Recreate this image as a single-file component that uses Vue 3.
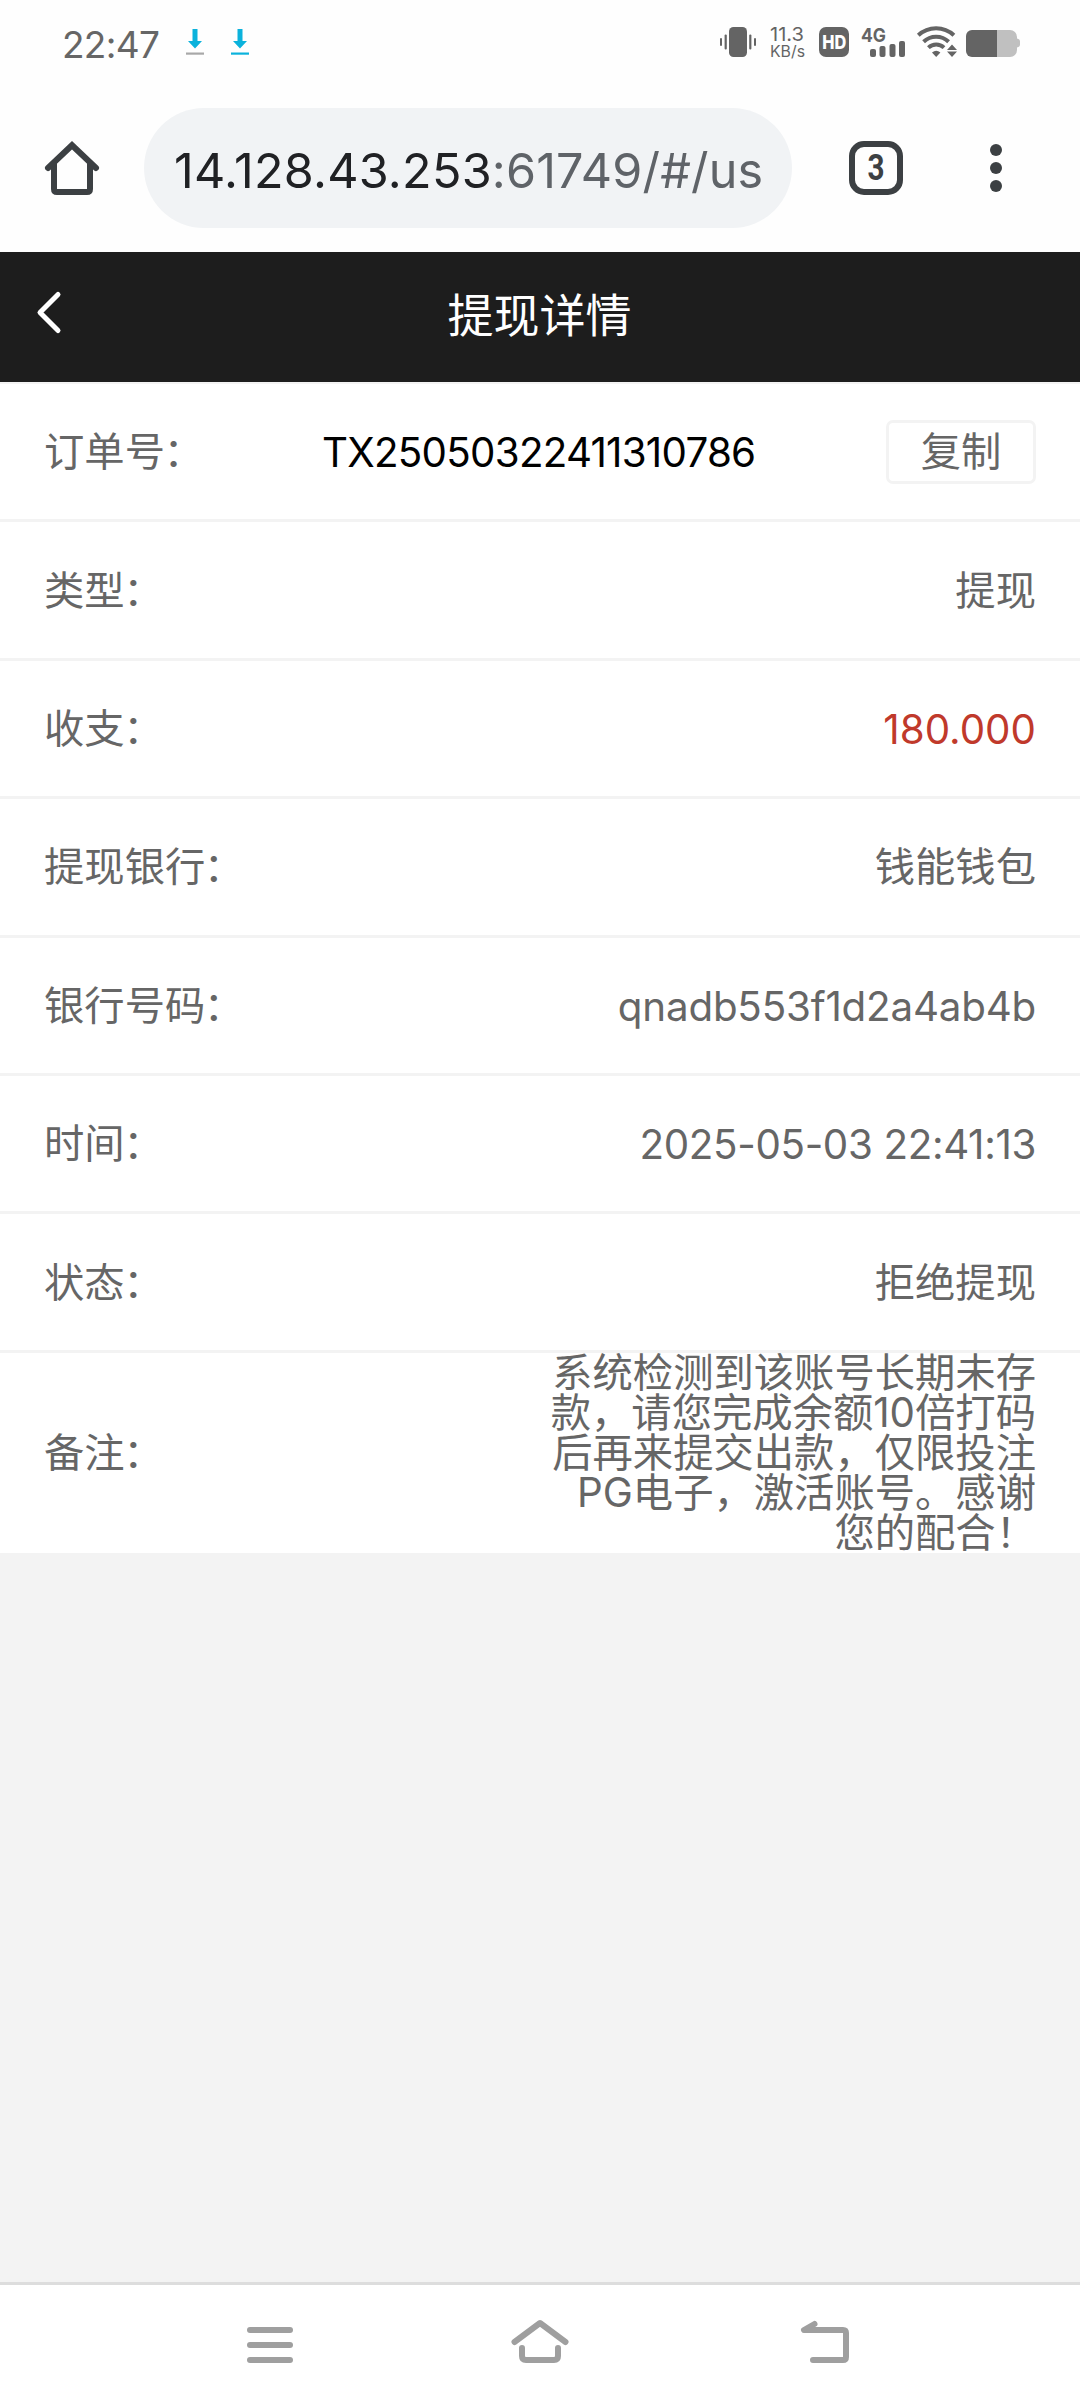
<script setup>
const rows = [
  { label: '类型', value: '提现', kind: 'cjk' },
  { label: '收支', value: '180.000', kind: 'amount' },
  { label: '提现银行', value: '钱能钱包', kind: 'cjk' },
  { label: '银行号码', value: 'qnadb553f1d2a4ab4b', kind: 'account' },
  { label: '时间', value: '2025-05-03 22:41:13', kind: 'time' },
  { label: '状态', value: '拒绝提现', kind: 'cjk' },
]
const note = [
  '系统检测到该账号长期未存',
  '款，请您完成余额10倍打码',
  '后再来提交出款，仅限投注',
  'PG电子，激活账号。感谢',
  '您的配合！',
]
</script>

<template>
  <div class="screen">
    <div class="status">
      <span class="clock">22:47</span>
      <svg class="dl" width="18" height="30" viewBox="0 0 18 30">
        <path d="M6.5 2h5v12H16l-7 7.500-7-7.500h4.500z" fill="#0bb2dc" />
        <path d="M0 25.500h18v2.200H0z" fill="#a8a8a8" />
      </svg>
      <svg class="dl second" width="18" height="30" viewBox="0 0 18 30">
        <path d="M6.5 2h5v12H16l-7 7.500-7-7.500h4.500z" fill="#0bb2dc" />
        <path d="M0 25.500h18v2.200H0z" fill="#0bb2dc" />
      </svg>
      <div class="indicators">
        <svg width="36" height="30" viewBox="0 0 36 30" fill="#646464">
          <rect x="9" y="0" width="18" height="30" rx="4.5" />
          <rect x="0" y="11" width="2" height="8" rx="1" />
          <rect x="4.6" y="7.5" width="2.2" height="15" rx="1" />
          <rect x="29.2" y="7.5" width="2.2" height="15" rx="1" />
          <rect x="34" y="11" width="2" height="8" rx="1" />
        </svg>
        <svg class="speed" width="36" height="32" viewBox="0 0 36 32" fill="#646464">
          <text x="0" y="14" font-size="19" textLength="34" lengthAdjust="spacingAndGlyphs">11.3</text>
          <text x="0" y="29.8" font-size="15.5" textLength="35" lengthAdjust="spacingAndGlyphs">KB/s</text>
        </svg>
        <svg class="hd" width="30" height="30" viewBox="0 0 30 30">
          <rect width="30" height="30" rx="7" fill="#646464" />
          <text x="3.2" y="21.8" font-size="19" font-weight="800" fill="#fff" textLength="24" lengthAdjust="spacingAndGlyphs">HD</text>
        </svg>
        <svg class="cell" width="45" height="30" viewBox="0 0 45 30" fill="#646464">
          <text x="0" y="14.5" font-size="19" font-weight="700" textLength="25" lengthAdjust="spacingAndGlyphs">4G</text>
          <rect x="9" y="22" width="6" height="8" rx="2" />
          <rect x="18.5" y="19" width="6" height="11" rx="2" />
          <rect x="28.5" y="17" width="6" height="13" rx="2" />
          <rect x="38" y="14" width="6" height="16" rx="2" />
        </svg>
        <svg class="wifi" width="40" height="30" viewBox="0 0 40 30">
          <g fill="none" stroke="#646464" stroke-width="4">
            <path d="M1.3 8.2a26 26 0 0 1 35.6 0" />
            <path d="M6.6 14.8a18 18 0 0 1 25 0" />
            <path d="M11.4 20.6a11.5 11.5 0 0 1 15.6 0" />
          </g>
          <path d="M15 25.5a6.5 6.5 0 0 1 8.4 0L19.2 30z" fill="#646464" />
          <path d="M35 14.5l6.5 8v1l-6.5 8-6.5-8v-1z" fill="#fefefe" />
          <path d="M35 17.5l5 5.5H30zM35 30l5-5.5H30z" fill="#646464" />
        </svg>
        <svg class="battery" width="54" height="30" viewBox="0 0 54 30">
          <path d="M31 3h13a7 7 0 0 1 7 7v1.5c2 .4 3 1.5 3 3v3c0 1.5-1 2.6-3 3V23a7 7 0 0 1-7 7H31z" fill="#c0c0c0" />
          <path d="M31 3H6a6 6 0 0 0-6 6v15a6 6 0 0 0 6 6h25z" fill="#646464" />
        </svg>
      </div>
    </div>

    <div class="toolbar">
      <svg class="home" width="54" height="54" viewBox="0 0 54 54" fill="none" stroke="#3c4043" stroke-width="6">
        <path d="M3 27L27 4.2 51 27" stroke-linecap="round" />
        <path d="M9 22v26q0 3 3 3h30q3 0 3-3V22" />
      </svg>
      <div class="address"><div class="url"><span class="host">14.128.43.253</span><span class="path">:61749/#/us</span></div></div>
      <svg class="tabs" width="54" height="54" viewBox="0 0 54 54">
        <rect x="3" y="3" width="48" height="48" rx="12" fill="none" stroke="#3c4043" stroke-width="6" />
        <text x="18.5" y="39" font-size="36" font-weight="700" fill="#3c4043" textLength="17" lengthAdjust="spacingAndGlyphs">3</text>
      </svg>
      <svg class="more" width="12" height="48" viewBox="0 0 12 48" fill="#3c4043">
        <circle cx="6" cy="6" r="6" /><circle cx="6" cy="24" r="6" /><circle cx="6" cy="42" r="6" />
      </svg>
    </div>

    <header class="title-bar">
      <svg class="back" width="24" height="42" viewBox="0 0 24 42" fill="none" stroke="#fff" stroke-width="5" stroke-linecap="round" stroke-linejoin="round">
        <path d="M21 3.5L3 21.5l18 18" />
      </svg>
      <h1>提现详情</h1>
    </header>

    <main class="details">
      <div class="row order">
        <span class="label">订单号<span class="colon">：</span></span>
        <span class="number">TX25050322411310786</span>
        <button class="copy">复制</button>
      </div>
      <div v-for="row in rows" :key="row.label" class="row">
        <span class="label">{{ row.label }}<span class="colon">：</span></span>
        <span class="value" :class="row.kind">{{ row.value }}</span>
      </div>
      <div class="row note">
        <span class="label">备注<span class="colon">：</span></span>
        <div class="note-text"><div v-for="line in note" :key="line">{{ line }}</div></div>
      </div>
    </main>

    <nav class="nav">
      <svg class="nav-menu" width="46" height="36" viewBox="0 0 46 36" fill="#9f9f9f">
        <rect width="46" height="6" rx="3" /><rect y="15" width="46" height="6" rx="3" /><rect y="30" width="46" height="6" rx="3" />
      </svg>
      <svg class="nav-home" width="58" height="44" viewBox="0 0 58 44" fill="none" stroke="#9f9f9f" stroke-width="6" stroke-linecap="round" stroke-linejoin="round">
        <path d="M3.5 22L29 3l25.5 19" />
        <path d="M11 28v8q0 4 4 4h28q4 0 4-4v-8" />
      </svg>
      <svg class="nav-back" width="49" height="44" viewBox="0 0 49 44" fill="none" stroke="#9f9f9f" stroke-width="6" stroke-linecap="round" stroke-linejoin="round">
        <path d="M13.5 4L3 10h39q3 0 3 3v24q0 3-3 3H12" />
      </svg>
    </nav>
  </div>
</template>

<style>
body { margin: 0; background: #f3f3f3; }
</style>

<style scoped>
.screen {
  width: 1080px;
  height: 2408px;
  display: flex;
  flex-direction: column;
  background: #f3f3f3;
  font-family: Inter, "Noto Sans CJK SC", sans-serif;
  overflow: hidden;
}
.screen > * { flex: none; }
svg { display: block; flex: none; overflow: visible; }
.status {
  height: 84px;
  box-sizing: border-box;
  padding: 27px 60px 0 62px;
  display: flex;
  align-items: flex-start;
  background: #fefefe;
}
.clock { width: 124px; font-size: 37px; line-height: 35px; color: #666; letter-spacing: -0.7px; white-space: nowrap; }
.second { margin-left: 27px; }
.indicators { margin-left: auto; display: flex; }
.speed { margin-left: 14px; }
.hd { margin-left: 13px; }
.cell { margin-left: 12px; }
.wifi { margin-left: 11px; }
.battery { margin-left: 9px; }
.toolbar { height: 168px; box-sizing: border-box; padding: 0 78px 0 45px; display: flex; align-items: center; background: #fefefe; }
.address { margin-left: 45px; width: 648px; height: 120px; box-sizing: border-box; border-radius: 60px; background: #f1f3f5; padding: 0 26px 0 30px; }
.url { overflow: hidden; white-space: nowrap; font-size: 48.5px; line-height: 125px; }
.host { color: #202124; letter-spacing: 0.25px; }
.path { color: #5f6368; letter-spacing: 0.15px; }
.tabs { margin-left: 57px; font-family: Roboto, sans-serif; }
.more { margin-left: 87px; }
.title-bar { height: 130px; display: flex; align-items: center; background: #1d1d1d; border-bottom: 2.6px solid #f3f3f3; }
.back { margin: 0 0 10px 37px; }
h1 { flex: 1; margin: 0 62px 3px 0; text-align: center; color: #fff; font-size: 46px; line-height: 125px; font-weight: 400; }
.details { background: #fff; color: #666; font-size: 40.32px; }
.row { height: 138.4px; box-sizing: border-box; border-bottom: 3px solid #f3f3f3; padding: 0 44px; display: flex; align-items: center; justify-content: space-between; white-space: nowrap; }
.label, .cjk { padding-bottom: 6px; }
.colon { margin-left: -1.5px; }
.number { color: #000; letter-spacing: -0.75px; padding-top: 2px; }
.order .label { width: 278px; }
.order .number { flex: 1; }
.copy { width: 150px; height: 64px; padding: 0; border: 3px solid #f3f3f3; border-radius: 7px; background: #fff; color: #666; font: inherit; line-height: 56px; }
.amount, .account, .time { padding-top: 2px; }
.amount { color: #c0392b; }
.account { letter-spacing: -0.2px; }
.time { letter-spacing: -0.35px; }
.row.note { height: 200px; border-bottom: 0; }
.note-text { text-align: right; line-height: 40px; }
.nav { height: 126px; box-sizing: border-box; margin-top: auto; border-top: 3px solid #ddd; padding: 35px 0 0 247px; display: flex; align-items: flex-start; background: #fff; }
.nav-menu { margin-top: 7px; }
.nav-home { margin-left: 218px; }
.nav-back { margin-left: 232px; }
</style>
